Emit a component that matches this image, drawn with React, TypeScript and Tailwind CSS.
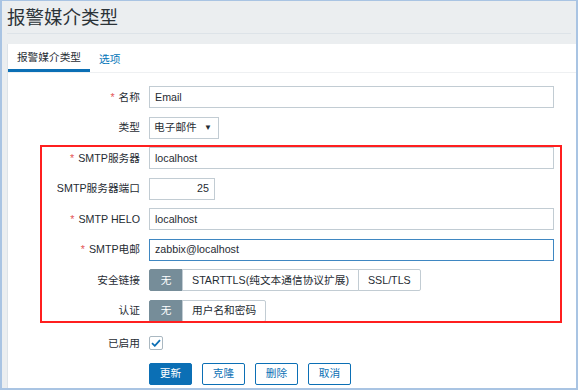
const font = { fontFamily: '"Liberation Sans", "Noto Sans CJK SC", sans-serif' };

function Label({ text, required }: { text: string; required?: boolean }) {
  return (
    <div className="flex h-[22px] items-center justify-end whitespace-nowrap text-[#1f2c33]">
      {required && <span className="mr-[4px] text-[#e45959]">*</span>}
      {text}
    </div>
  );
}

function TextInput({ value, width, focused, right }: { value: string; width: string; focused?: boolean; right?: boolean }) {
  return (
    <div
      className={`flex h-[22px] items-center border bg-white px-[5px] text-[#1f2c33] ${width} ${
        focused ? "border-[#3f87c2]" : "border-[#c2ccd3]"
      } ${right ? "justify-end" : ""}`}
    >
      {value}
    </div>
  );
}

function Segments({ items }: { items: string[] }) {
  return (
    <div className="flex h-[22px]">
      {items.map((s, i) => (
        <div
          key={s}
          className={`flex items-center justify-center border whitespace-nowrap ${
            i === 0
              ? "w-[34px] border-[#768d99] bg-[#768d99] text-white"
              : "-ml-px border-[#c2ccd3] bg-white px-[9px] text-[#1f2c33]"
          } ${i === items.length - 1 ? "rounded-r-[2px]" : ""} ${i === 0 ? "rounded-l-[2px]" : ""}`}
        >
          {s}
        </div>
      ))}
    </div>
  );
}

export default function App() {
  return (
    <div
      className="flex h-[390px] w-[578px] flex-col overflow-hidden border-x-2 border-b-2 border-t border-[#a9c4e3] bg-[#ebeef0] text-[10.7px]"
      style={font}
    >
      <div className="mx-[5px] flex h-[33px] shrink-0 items-center border-b border-[#dde3e8] pt-[2px] text-[18.5px] text-[#2b3338]">
        报警媒介类型
      </div>

      <div className="relative ml-[5px] mt-[10px] flex flex-1 flex-col border-l border-[#dde3e8] bg-white">
        <div className="flex h-[29px] border-b border-[#eef0f2]">
          <div className="flex h-[28px] w-[82px] items-center justify-center border-b-[3px] border-[#0b6fb5] pt-[2px] text-[#1f2c33]">
            报警媒介类型
          </div>
          <div className="flex h-[28px] items-center px-[9px] pt-[2px] text-[#0275b8]">选项</div>
        </div>

        <div className="relative grid grid-cols-[132px_1fr] gap-x-[9px] gap-y-[8.5px] pt-[13px]">
          <Label text="名称" required />
          <TextInput value="Email" width="w-[405px]" />

          <Label text="类型" />
          <div className="flex h-[22px] w-[70px] items-center justify-between border border-[#c2ccd3] bg-white pl-[4px] pr-[6px] text-[#1f2c33]">
            <span>电子邮件</span>
            <span className="text-[8px]">▼</span>
          </div>

          <Label text="SMTP服务器" required />
          <TextInput value="localhost" width="w-[405px]" />

          <Label text="SMTP服务器端口" />
          <TextInput value="25" width="w-[66px]" right />

          <Label text="SMTP HELO" required />
          <TextInput value="localhost" width="w-[405px]" />

          <Label text="SMTP电邮" required />
          <TextInput value="zabbix@localhost" width="w-[405px]" focused />

          <Label text="安全链接" />
          <Segments items={["无", "STARTTLS(纯文本通信协议扩展)", "SSL/TLS"]} />

          <Label text="认证" />
          <Segments items={["无", "用户名和密码"]} />

          <div className="mt-[2px]">
            <Label text="已启用" />
          </div>
          <div className="mt-[2px] flex h-[22px] items-center">
            <div className="flex h-[14px] w-[14px] items-center justify-center rounded-[2px] border border-[#aab8c1] bg-white">
              <svg width="10" height="8" viewBox="0 0 10 8" fill="none">
                <path d="M1 4.2 L3.8 6.8 L9 1.2" stroke="#0b6fb5" strokeWidth="1.8" />
              </svg>
            </div>
          </div>

          <div />
          <div className="flex gap-[10px]">
            <button className="h-[22px] w-[43px] rounded-[2px] border border-[#0b6fb5] bg-[#0b6fb5] text-white">更新</button>
            <button className="h-[22px] w-[43px] rounded-[2px] border border-[#0b6fb5] bg-white text-[#0b6fb5]">克隆</button>
            <button className="h-[22px] w-[43px] rounded-[2px] border border-[#0b6fb5] bg-white text-[#0b6fb5]">删除</button>
            <button className="h-[22px] w-[43px] rounded-[2px] border border-[#0b6fb5] bg-white text-[#0b6fb5]">取消</button>
          </div>

          <div className="pointer-events-none absolute left-[32px] top-[72px] h-[178px] w-[522px] border-2 border-[#ff1f1f]" />
        </div>
      </div>
    </div>
  );
}
